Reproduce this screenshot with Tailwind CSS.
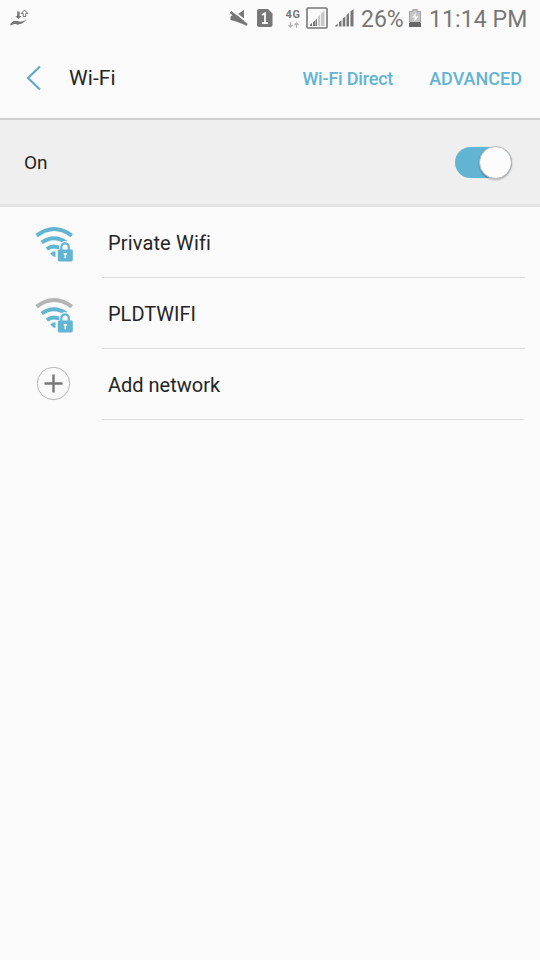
<!DOCTYPE html>
<html lang="en">
<head>
<meta charset="utf-8">
<title>Wi-Fi</title>
<script src="https://cdn.jsdelivr.net/npm/@tailwindcss/browser@4"></script>
</head>
<body class="bg-[#fafafa] font-['Roboto',sans-serif] text-[#252525] [font-variant-ligatures:none]">
<svg class="hidden">
  <symbol id="secured" viewBox="0 0 40 40">
    <path d="M6.700 16.500Q19 8 31.300 16.500M11.800 23Q19 18 26.200 23" fill="none" stroke="#62b4d3" stroke-width="3.800"/>
    <path d="M15.300 27.500Q17.500 25 20.500 25.200v6Q17.500 30.500 15.300 27.500Z" fill="#62b4d3"/>
    <path d="M26.400 25v-4.400a3.700 3.700 0 0 1 7.400 0V25" fill="#fafafa" stroke="#fafafa" stroke-width="4"/>
    <path d="M21.800 23h3v13h-3Z" fill="#fafafa"/>
    <path d="M26.400 25v-4a3.700 3.700 0 0 1 7.400 0V25" fill="none" stroke="#62b4d3" stroke-width="2.200"/>
    <rect x="22.800" y="23.500" width="15" height="12" rx="1.400" fill="#62b4d3"/>
    <path d="M30.300 27.200v5M28.700 27.900h3.200" stroke="#fafafa" stroke-width="1.600"/>
  </symbol>
</svg>
<main class="flex h-[960px] w-[540px] flex-col overflow-hidden">
  <div class="flex h-9 shrink-0 items-center text-[#777]">
    <svg class="ml-[9px] h-5 w-5" viewBox="0 0 20 20" fill="#777"><path d="M1.500 15.500 4.500 13l4 0 3 .8 6-1.800-4.500 3.500-4.500 1.200-2.500-.9-4.500 1.700ZM8.200 3.500h2.400V8h2L9.400 11 6.300 8h1.900Z"/><path d="M14.200 8.500V5.500h-2l3.300-3.500 3.300 3.500h-2V8.500Z" fill="none" stroke="#777" stroke-width="1"/></svg>
    <svg class="ml-[200px] h-5 w-5" viewBox="0 0 20 20" fill="#777"><path d="M1.500 9.500Q1.500 7 5 7h2.500L15 2v14.500L7 13.500 1.500 12Z"/><path d="m3 2 16 13" stroke="#fafafa" stroke-width="1.800"/><path d="m1.500 4 16.500 13" stroke="#777" stroke-width="2.600"/></svg>
    <svg class="ml-[8px] h-[18px] w-4" viewBox="0 0 16 18"><path d="M2 0h9l4.500 4.500V16a2 2 0 0 1-2 2H2a2 2 0 0 1-2-2V2a2 2 0 0 1 2-2Z" fill="#777"/><path d="M5 6 8 4.300V14M5 14h6" fill="none" stroke="#fafafa" stroke-width="1.800"/></svg>
    <div class="ml-[11px] flex w-[18px] flex-col items-center">
      <span class="text-[11px] leading-[12px] font-bold tracking-[0.5px]">4G</span>
      <svg class="mt-px h-[6px] w-[11px]" viewBox="0 0 11 6" fill="none" stroke="#b5b5b5" stroke-width="1.300"><path d="M2.500 0v5M.5 3l2 2 2-2M8.500 6V1M6.500 3l2-2 2 2"/></svg>
    </div>
    <svg class="ml-[4px] h-[22px] w-[22px]" viewBox="0 0 22 22"><rect x="1" y="1" width="20" height="20" rx="1" fill="none" stroke="#777" stroke-width="1.600"/><path d="M4 17.500 6 16v3H4ZM7 15l2-1.500V19H7ZM9.500 13l1.500-1.500V19H9.500Z" fill="#777"/><path d="M12 9.500 14.200 8v11H12ZM15 6.500 18.500 3.500V19H15Z" fill="#c8c8c8"/></svg>
    <svg class="ml-[7px] h-5 w-5" viewBox="0 0 20 20" fill="#777"><path d="M0 18 2.800 15.500v3H0ZM4 14l2.500-1.800V18.500H4ZM7.700 10.500l2.600-1.800V18.500H7.700ZM11.500 7 14 5v13.500h-2.500ZM15.400 3.500 18.500 1V18.500h-3.100Z"/></svg>
    <span class="ml-[6px] mt-[3px] w-[44px] text-[23px] leading-7 whitespace-nowrap">26%</span>
    <svg class="ml-[4px] h-[18px] w-3" viewBox="0 0 12 18"><path d="M3.500 0h5v2H12v16H0V2h3.500Z" fill="#c4c4c4"/><path d="M0 13h12v5H0Z" fill="#666"/><path d="m7 3.500-4 5h3l-1.500 5 5-6H6.500Z" fill="#fafafa"/><path d="M.5 14V2.500H4V.5h4v2h3.500V14" fill="none" stroke="#a5a5a5"/></svg>
    <span class="ml-[8px] mt-[3px] text-[23px] leading-7 tracking-[0.1px] whitespace-nowrap">11:14 PM</span>
  </div>
  <header class="flex h-[84px] shrink-0 items-center border-b-2 border-[#cfcfcf] pt-[2px] pr-[18px]">
    <svg class="ml-[26px] h-[26px] w-4" viewBox="0 0 16 26"><path d="M14 1.500 2 13l12 11.500" fill="none" stroke="#62a9c9" stroke-width="2.200"/></svg>
    <h1 class="ml-[27px] text-[21px] leading-7 tracking-[0.1px]">Wi-Fi</h1>
    <span class="ml-auto text-[18px] font-medium tracking-[-0.2px] text-[#62b4d3]">Wi-Fi Direct</span>
    <span class="ml-9 text-[18px] font-medium text-[#62b4d3]">ADVANCED</span>
  </header>
  <section class="flex h-[87px] shrink-0 items-center justify-between border-b-[3px] border-[#e2e2e2] bg-[#efefef] pr-7 pl-6">
    <span class="pt-0.5 text-[19px]">On</span>
    <div class="flex h-[31px] w-[57px] items-center justify-end rounded-full bg-[#62b4d3]">
      <div class="h-[33px] w-[33px] shrink-0 rounded-full border border-[#b9b9b9] bg-[#fcfcfc] shadow-[0_1px_2px_#0004]"></div>
    </div>
  </section>
  <ul>
    <li class="flex h-[71px]">
      <svg class="mt-[19px] ml-[35px] h-10 w-10" viewBox="0 0 40 40"><path d="M1.700 9.600Q19-3.500 36.800 9.600" fill="none" stroke="#62b4d3" stroke-width="4"/><use href="#secured"/></svg>
      <div class="ml-[27px] flex w-[423px] items-center border-b border-[#dedede] pt-0.5 pl-[6px] text-[20px] tracking-[0.15px]">Private Wifi</div>
    </li>
    <li class="flex h-[71px]">
      <svg class="mt-[19px] ml-[35px] h-10 w-10" viewBox="0 0 40 40"><path d="M1.700 9.600Q19-3.500 36.800 9.600" fill="none" stroke="#b4b4b4" stroke-width="4"/><use href="#secured"/></svg>
      <div class="ml-[27px] flex w-[423px] items-center border-b border-[#dedede] pt-0.5 pl-[6px] text-[20px]">PLDTWIFI</div>
    </li>
    <li class="flex h-[71px]">
      <svg class="mt-[17px] ml-[36px] h-[35px] w-[35px]" viewBox="0 0 35 35" fill="none"><circle cx="17.500" cy="17.500" r="16.200" stroke="#b5b5b5"/><path d="M17.500 8.500v18M8.500 17.500h18" stroke="#777" stroke-width="2.400"/></svg>
      <div class="ml-[31px] flex w-[422px] items-center border-b border-[#dedede] pt-0.5 pl-[6px] text-[20px]">Add network</div>
    </li>
  </ul>
</main>
</body>
</html>
